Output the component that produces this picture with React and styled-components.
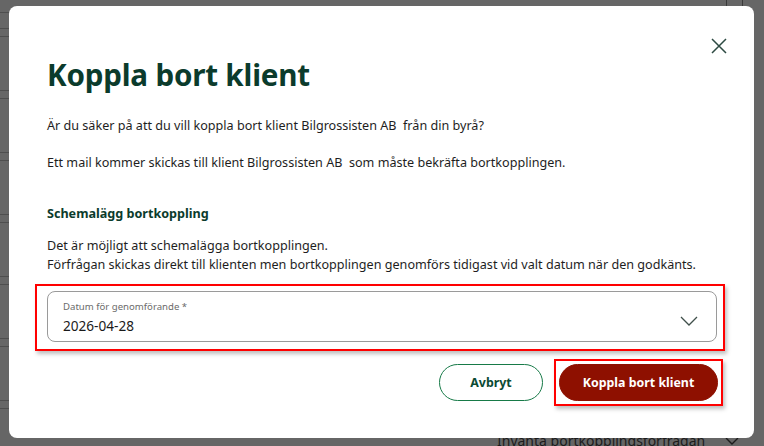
import React from 'react';
import styled, { createGlobalStyle } from 'styled-components';

const GlobalStyle = createGlobalStyle`
  html, body {
    margin: 0;
    padding: 0;
    background: #666666;
    font-family: "Noto Sans", "Open Sans", sans-serif;
  }
  * { box-sizing: border-box; }
`;

const Page = styled.div`
  position: relative;
  width: 764px;
  height: 446px;
  overflow: hidden;
  background:
    linear-gradient(#4e4e4e, #4e4e4e) 0 12px / 9px 1px no-repeat,
    repeating-linear-gradient(
      to bottom,
      transparent 0,
      transparent 28px,
      #4e4e4e 28px,
      #4e4e4e 29px,
      transparent 29px,
      transparent 36px,
      #4e4e4e 36px,
      #4e4e4e 37px,
      transparent 37px,
      transparent 62px
    ) 0 0 / 9px 100% no-repeat,
    #666666;
  padding: 6px 10px 0 9px;
`;

// page content that sits behind the dialog overlay
const Behind = styled.div`
  position: absolute;
  left: 497px;
  top: 431px;
  display: flex;
  align-items: center;
  gap: 20px;
  white-space: nowrap;
  color: #1c1c1c;
  font-size: 14px;
  line-height: 20px;
`;

const BehindLine = styled.div`
  position: absolute;
  top: 0;
  height: 6px;
  width: 1px;
  left: ${p => p.x}px;
  background: #3a3a3a;
`;

const Modal = styled.div`
  position: relative;
  width: 745px;
  height: 432px;
  background: #ffffff;
  border-radius: 8px;
  padding: 40px 38px 0 38px;
  display: flex;
  flex-direction: column;
`;

const Close = styled.button`
  position: absolute;
  top: 31px;
  right: 26px;
  width: 18px;
  height: 18px;
  padding: 0;
  border: none;
  background: none;
  color: #2d4a42;
  display: flex;
  align-items: center;
  justify-content: center;
`;

const Title = styled.h1`
  margin: 9px 0 0 0;
  font-size: 29.6px;
  line-height: 40px;
  font-weight: 700;
  color: #0b3b2c;
  letter-spacing: -0.2px;
`;

const Text = styled.p`
  margin: ${p => p.mt || 0}px 0 0 0;
  font-size: 12.6px;
  line-height: 19px;
  color: #1e1e1e;
  white-space: pre-wrap;
`;

const SubTitle = styled.h3`
  margin: 32px 0 0 0;
  font-size: 12.6px;
  line-height: 19px;
  font-weight: 700;
  color: #0b3b2c;
`;

// red annotation frame around a part of the dialog
const Highlight = styled.div`
  border: 2px solid #ff0000;
  box-shadow: 2px 3px 4px rgba(0, 0, 0, 0.25);
  padding: ${p => p.pad};
  margin: ${p => p.m};
`;

const Field = styled.div`
  height: 51px;
  border: 1px solid #9a9a9a;
  border-radius: 8px;
  padding: 8px 18px 0 15px;
  display: flex;
  align-items: center;
  justify-content: space-between;
`;

const FieldInner = styled.div`
  display: flex;
  flex-direction: column;
  align-self: flex-start;
`;

const FieldLabel = styled.span`
  font-size: 9.6px;
  line-height: 14px;
  color: #6b6b6b;
`;

const FieldValue = styled.span`
  margin-top: 3px;
  font-size: 13.6px;
  line-height: 18px;
  color: #1a1a1a;
`;

const Chevron = styled.span`
  display: flex;
  color: #40504b;
`;

const Actions = styled.div`
  display: flex;
  justify-content: flex-end;
  align-items: center;
  gap: 11px;
  margin: 8px -7px 0 0;
`;

const Button = styled.button`
  height: 37px;
  border-radius: 19px;
  font-family: inherit;
  font-size: 12.4px;
  font-weight: 700;
  padding: 0 20px;
  cursor: pointer;
  border: 1px solid ${p => (p.primary ? '#8e1000' : '#177a48')};
  background: ${p => (p.primary ? '#8e1000' : '#ffffff')};
  color: ${p => (p.primary ? '#ffffff' : '#0b4a33')};
  width: ${p => p.w}px;
  display: block;
`;

export default function App() {
  return (
    <>
      <GlobalStyle />
      <Page>
        <BehindLine x={726} />
        <BehindLine x={742} />
        <Behind>
          <span>Invänta bortkopplingsförfrågan</span>
          <svg width="14" height="10" viewBox="0 0 14 10" fill="none" stroke="#1c1c1c" strokeWidth="1.4">
            <path d="M1 2l6 6 6-6" />
          </svg>
        </Behind>
        <Modal>
          <Close aria-label="Stäng">
            <svg width="16" height="16" viewBox="0 0 16 16" fill="none" stroke="currentColor" strokeWidth="1.5">
              <path d="M1 1l14 14M15 1L1 15" />
            </svg>
          </Close>
          <Title>Koppla bort klient</Title>
          <Text mt={21}>Är du säker på att du vill koppla bort klient Bilgrossisten AB  från din byrå?</Text>
          <Text mt={18}>Ett mail kommer skickas till klient Bilgrossisten AB  som måste bekräfta bortkopplingen.</Text>
          <SubTitle>Schemalägg bortkoppling</SubTitle>
          <Text mt={13}>
            Det är möjligt att schemalägga bortkopplingen.
            <br />
            Förfrågan skickas direkt till klienten men bortkopplingen genomförs tidigast vid valt datum när den godkänts.
          </Text>
          <Highlight pad="5px 6px 7px 10px" m="10px -9px 0 -12px">
            <Field>
              <FieldInner>
                <FieldLabel>Datum för genomförande *</FieldLabel>
                <FieldValue>2026-04-28</FieldValue>
              </FieldInner>
              <Chevron>
                <svg width="18" height="10" viewBox="0 0 18 10" fill="none" stroke="currentColor" strokeWidth="1.3">
                  <path d="M1 1l8 8 8-8" />
                </svg>
              </Chevron>
            </Field>
          </Highlight>
          <Actions>
            <Button w={104}>Avbryt</Button>
            <Highlight pad="3px" m="0">
              <Button primary w={159}>Koppla bort klient</Button>
            </Highlight>
          </Actions>
        </Modal>
      </Page>
    </>
  );
}
